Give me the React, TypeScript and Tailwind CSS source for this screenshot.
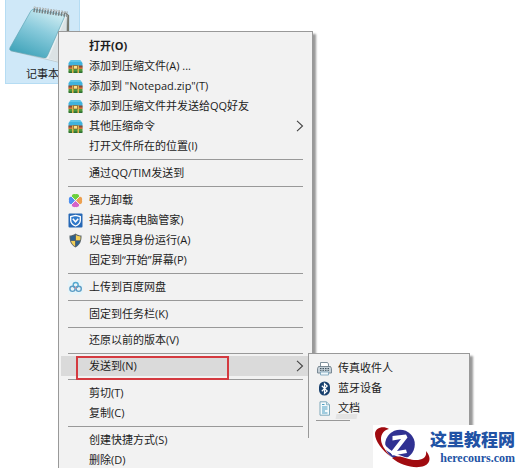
import type { ReactNode } from "react";

const FONT = "font-['Open_Sans','Noto_Sans_CJK_SC',sans-serif]";

function ArchiveIcon() {
  return (
    <svg viewBox="0 0 15 15" className="size-[15px]" aria-hidden="true">
      <path d="M3 1h9l2.500 3v4h-14V4Z" fill="#3fb2dc" />
      <path d="M3 1h9l1.500 2h-12Z" fill="#62c6e8" />
      <path d="M.5 6.500h14v3H.5Z" fill="#8f4a35" />
      <path d="M.5 8.500h14v1.500H.5Z" fill="#cf7a3c" />
      <path d="M.5 10h14v3q0 1-1 1h-12q-1 0-1-1Z" fill="#4f9a3c" />
      <path d="M.5 12.500h14v.5q0 1-1 1h-12q-1 0-1-1Z" fill="#2f6e35" />
      <path d="M4 6.500h1.500V14H4ZM9.500 6.500H11V14H9.500Z" fill="#dcb24a" />
      <path d="M5.500 6.500h4V10h-4Z" fill="#f7e08a" stroke="#7a5524" strokeWidth="0.600" />
    </svg>
  );
}

function CloverIcon() {
  return (
    <svg viewBox="0 0 15 15" className="size-[15px]" aria-hidden="true">
      <path d="M7.500 7 4.200 4.200C3 2 5 .5 7.300 1.200c2.700-.8 4.700.8 3.500 3Z" fill="#6cd03c" />
      <path d="M7 7.500 4.200 10.800C2 12 .3 10 1 7.600.3 5 2 3 4.200 4.200Z" fill="#4c8ff0" />
      <path d="m8 7.500 2.800-3.300c2.200-1.200 4 .9 3.200 3.400.8 2.400-1 4.400-3.200 3.200Z" fill="#eda050" />
      <path d="m7.500 8 3.300 2.800c1.200 2.200-.9 3.900-3.300 3.200-2.400.7-4.500-1-3.300-3.200Z" fill="#d562c8" />
      <path d="m3.500 3.500 8 8M11.500 3.500l-8 8" stroke="#f2f2f2" strokeWidth="0.900" />
    </svg>
  );
}

function GuardIcon() {
  return (
    <svg viewBox="0 0 15 15" className="size-[15px]" aria-hidden="true">
      <rect x="0.500" y="0.500" width="14" height="14" rx="1" fill="#2768b5" />
      <path d="M7.500 2.300 12.300 3.500v4c0 2.600-2 4.300-4.800 5.500-2.800-1.200-4.800-2.900-4.800-5.500v-4Z" fill="#2f79cb" stroke="#fff" strokeWidth="1.300" />
      <path d="m4.800 5.800 2.700 3 2.700-3" fill="none" stroke="#fff" strokeWidth="1.500" />
    </svg>
  );
}

function ShieldIcon() {
  return (
    <svg viewBox="0 0 15 15" className="size-[15px]" aria-hidden="true">
      <path d="M7.500.5C9.500 2 11.500 2.500 13.500 2.500c.3 5.500-1.500 9.500-6 12-4.500-2.500-6.300-6.500-6-12 2 0 4-.5 6-2Z" fill="#59656b" />
      <path d="M7 2C5.600 3 4 3.400 2.500 3.500c0 1.500 0 2.500.3 3.700H7Z" fill="#2d618d" />
      <path d="M8 2c1.400 1 3 1.400 4.500 1.500 0 1.500 0 2.500-.3 3.700H8Z" fill="#f1cf57" />
      <path d="M7 8H3c.6 2.200 2 4 4 5.200Z" fill="#f1cf57" />
      <path d="M8 8h4c-.6 2.200-2 4-4 5.200Z" fill="#2d618d" />
    </svg>
  );
}

function CloudDiskIcon() {
  return (
    <svg viewBox="0 0 15 15" className="size-[15px]" aria-hidden="true">
      <rect width="15" height="15" rx="3" fill="#e8f4f8" />
      <g fill="none" strokeWidth="1.400">
        <circle cx="7.700" cy="5" r="2.500" stroke="#51a9d0" />
        <circle cx="4.500" cy="8.800" r="2.600" stroke="#5b9dc6" />
        <circle cx="10.700" cy="8.800" r="2.600" stroke="#5b9dc6" />
      </g>
      <circle cx="7.600" cy="8" r="0.900" fill="#d68c96" />
    </svg>
  );
}

function FaxIcon() {
  return (
    <svg viewBox="0 0 15 15" className="size-[15px]" aria-hidden="true">
      <path d="M3.500 6V1.500h7L11.500 3v3" fill="#fff" stroke="#7f909b" />
      <path d="M1.500 5.500h12l1 2v4.500h-14V7.500Z" fill="#c5d0d8" stroke="#6f808b" strokeWidth="0.900" />
      <path d="M3 7.500h9M3 9.300h9" stroke="#40545f" strokeDasharray="1.500 1" />
      <path d="M3.500 11h8v3h-8Z" fill="#eef7fb" stroke="#74a0b8" strokeWidth="0.800" />
    </svg>
  );
}

function BluetoothIcon() {
  return (
    <svg viewBox="0 0 15 15" className="size-[15px]" aria-hidden="true">
      <rect x="2" y="0.500" width="11" height="14" rx="5.500" fill="#173f6d" />
      <path d="m4.800 4.800 5.400 5.200-2.700 2.500v-10l2.700 2.500-5.400 5.200" fill="none" stroke="#fff" strokeWidth="1.200" />
    </svg>
  );
}

function DocumentIcon() {
  return (
    <svg viewBox="0 0 15 15" className="size-[15px]" aria-hidden="true">
      <path d="M3 .8h6.500l3 3v10.400H3Z" fill="#f4fafc" stroke="#7fa9bb" />
      <path d="M9.500.8v3h3" fill="#cfe4ed" stroke="#7fa9bb" strokeWidth="0.800" />
      <path d="M5 6h5.500M5 8h5.500M5 10h3M5 12h5.500" stroke="#4f9fc2" />
      <path d="M5 3.500h2.500" stroke="#4f9fc2" />
    </svg>
  );
}

function Chevron() {
  return (
    <svg viewBox="0 0 8 12" className="ml-auto h-3 w-2" aria-hidden="true">
      <path d="m1 .8 5.500 5.200L1 11.200" fill="none" stroke="#444" strokeWidth="1.100" />
    </svg>
  );
}

type Item = {
  label: string;
  icon?: ReactNode;
  bold?: boolean;
  arrow?: boolean;
  active?: boolean;
};

function Row({ label, icon, bold, arrow, active }: Item) {
  return (
    <button
      type="button"
      role="menuitem"
      aria-haspopup={arrow ? "menu" : undefined}
      className={`flex h-5 w-full items-center pr-[6px] pl-[7px] text-left whitespace-nowrap ${
        bold ? "font-bold" : ""
      } ${active ? "bg-[#dadada]" : ""}`}
    >
      <span className="mr-[6px] size-[15px] shrink-0">{icon}</span>
      {label}
      {arrow && <Chevron />}
    </button>
  );
}

type Group = { gap: string; items: Item[] };

const groups: Group[] = [
  {
    gap: "",
    items: [
      { label: "打开(O)", bold: true },
      { label: "添加到压缩文件(A) ...", icon: <ArchiveIcon /> },
      { label: '添加到 "Notepad.zip"(T)', icon: <ArchiveIcon /> },
      { label: "添加到压缩文件并发送给QQ好友", icon: <ArchiveIcon /> },
      { label: "其他压缩命令", icon: <ArchiveIcon />, arrow: true },
      { label: "打开文件所在的位置(I)" },
    ],
  },
  { gap: "h-[7px]", items: [{ label: "通过QQ/TIM发送到" }] },
  {
    gap: "h-[7px]",
    items: [
      { label: "强力卸载", icon: <CloverIcon /> },
      { label: "扫描病毒(电脑管家)", icon: <GuardIcon /> },
      { label: "以管理员身份运行(A)", icon: <ShieldIcon /> },
      { label: "固定到“开始”屏幕(P)" },
    ],
  },
  { gap: "h-[7px]", items: [{ label: "上传到百度网盘", icon: <CloudDiskIcon /> }] },
  { gap: "h-[7px]", items: [{ label: "固定到任务栏(K)" }] },
  { gap: "h-[6px]", items: [{ label: "还原以前的版本(V)" }] },
  { gap: "h-[6px]", items: [{ label: "发送到(N)", arrow: true, active: true }] },
  { gap: "h-[7px]", items: [{ label: "剪切(T)" }, { label: "复制(C)" }] },
  { gap: "h-[7px]", items: [{ label: "创建快捷方式(S)" }, { label: "删除(D)" }] },
];

function NotepadIcon() {
  return (
    <svg viewBox="0 0 74 66" className="h-[66px] w-full" aria-hidden="true">
      <defs>
        <linearGradient id="cover" x1="0.800" y1="0" x2="0.300" y2="1">
          <stop offset="0" stopColor="#d5eff4" />
          <stop offset="0.450" stopColor="#8acbdc" />
          <stop offset="1" stopColor="#3fa3b9" />
        </linearGradient>
      </defs>
      <path d="m60 12 4 3v50l-8-2Z" fill="#77786f" />
      <path d="m58 12 4 3-3 49L5 51Z" fill="#e9eff1" stroke="#b4c0c4" strokeWidth="0.700" />
      <path d="m43 59 18-42 1 47Z" fill="#dbe2e4" />
      <path d="M28 9 60 15 42 56q-1 3-4 2L5 51q-2-1-1-3L25 11q1-2 3-2Z" fill="url(#cover)" stroke="#5ea5b5" strokeWidth="0.700" />
      <path d="m28 9 34 5" stroke="#777f80" strokeWidth="5.500" strokeDasharray="1.500 1.300" />
      <path d="m28 7 34 5" stroke="#c7cdcc" strokeWidth="1.500" strokeDasharray="1.500 1.300" />
    </svg>
  );
}

function SendToMenu() {
  return (
    <div
      role="menu"
      aria-label="发送到"
      className="absolute top-[353px] bottom-0 left-[308px] w-[162px] border-t border-r border-[#999] bg-[#f2f2f2] shadow-[3px_3px_2px_#999]"
    >
      <div className="h-[84px] border-l border-[#999] pt-1 pl-px">
        <Row label="传真收件人" icon={<FaxIcon />} />
        <Row label="蓝牙设备" icon={<BluetoothIcon />} />
        <Row label="文档" icon={<DocumentIcon />} />
        <div className="mt-[2px] ml-[6px] h-px w-[34px] bg-[#999]" />
      </div>
      <div className="absolute top-[60px] left-[28px] h-[5px] w-[21px] -skew-x-12 bg-[#e3e3e3]" />
    </div>
  );
}

function SiteBadge() {
  return (
    <div className="absolute right-0 bottom-0 flex h-[43px] w-[147px] items-center bg-white">
      <svg viewBox="0 0 57 43" className="h-[43px] w-[57px] shrink-0" aria-hidden="true">
        <circle cx="27" cy="19.500" r="14.800" fill="#303192" />
        <path d="M9 13C8 24 28 37 50 34" fill="none" stroke="#fff" strokeWidth="2.500" />
        <path d="M16 4C10 0 2 3 2 9c0 7 7 16 16 23C11 24 8 19 8 14 8 9 11 5 16 4Z" fill="#a00b10" />
        <path d="M19 33c9 8 24 11 32 8 7-3 7-9 2-15 1 6-3 9-10 9-6 0-9-2-14-3-4-1-8 0-10 1Z" fill="#a00b10" />
        <path d="m19.500 11 13.500-1.500 1.500 3L24 26l9-1.500 1 3.500-14.500 2.500-2-3L28 14l-8.500 1.500Z" fill="#fff" />
      </svg>
      <div className="flex flex-col items-end">
        <span className="h-[22px] font-['Noto_Sans_CJK_SC',sans-serif] text-[17px] leading-[17px] font-black text-[#2253a5]">
          这里教程网
        </span>
        <span className="font-['Liberation_Serif',serif] text-[12px] leading-3 font-bold text-[#2253a5]">
          herecours.com
        </span>
      </div>
    </div>
  );
}

export default function App() {
  return (
    <main className={`relative h-screen overflow-hidden bg-white text-[11px] leading-4 text-[#1c1c1c] ${FONT}`}>
      <figure className="ml-[5px] flex h-[84px] w-[75px] flex-col items-center border border-t-0 border-[#b5dcf3] bg-[#cfe8f8]">
        <NotepadIcon />
        <figcaption>记事本</figcaption>
      </figure>

      <nav
        role="menu"
        aria-label="快捷菜单"
        className="absolute top-[31px] left-[58px] w-[255px] border border-[#999] bg-[#f2f2f2] px-[2px] pt-1 pb-8 shadow-[3px_3px_2px_#999]"
      >
        {groups.map(({ gap, items }) => (
          <div key={items[0].label}>
            {gap && (
              <div className={`mx-[7px] pt-[3px] ${gap}`}>
                <div className="h-px bg-[#999]" />
              </div>
            )}
            {items.map((item) => (
              <Row key={item.label} {...item} />
            ))}
          </div>
        ))}
      </nav>

      <div className="pointer-events-none absolute top-[356px] left-[76px] h-[24px] w-[153px] border-2 border-[#d43a40]" />
      <SendToMenu />
      <SiteBadge />
    </main>
  );
}
